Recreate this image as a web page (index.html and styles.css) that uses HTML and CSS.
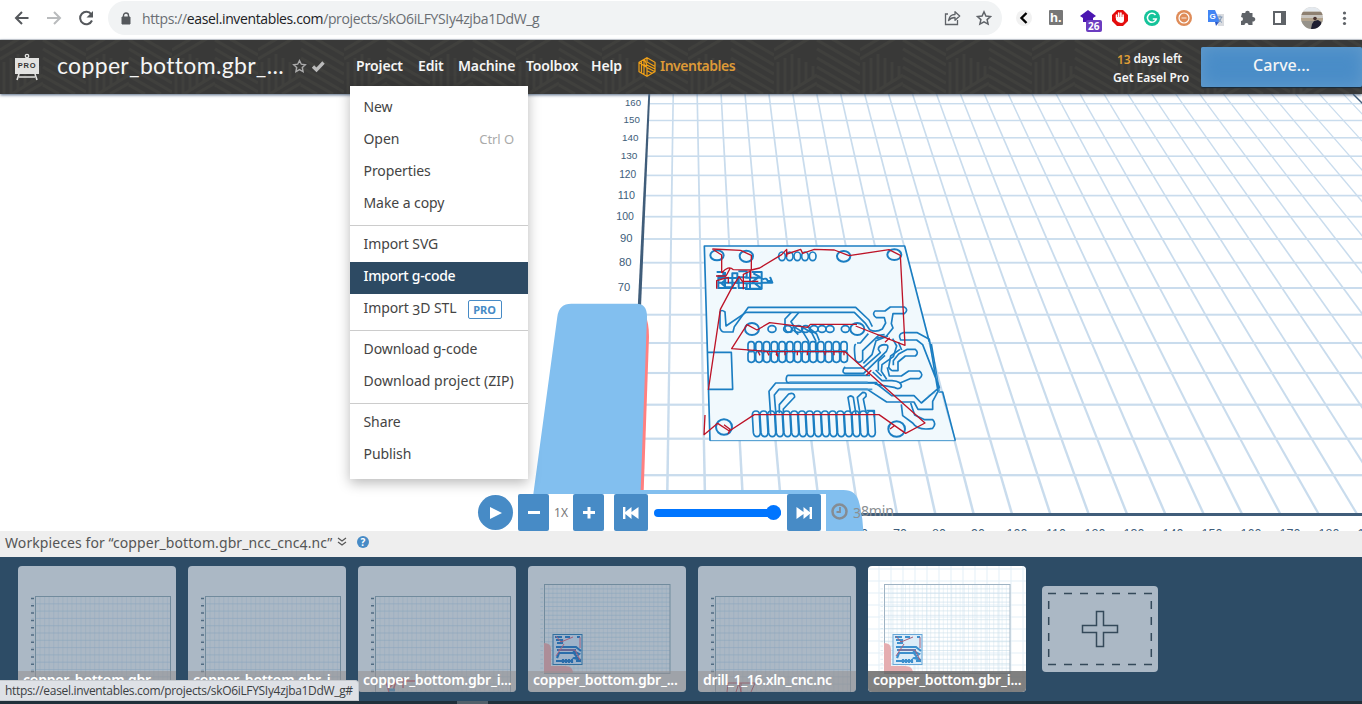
FILE: index.html
```html
<!DOCTYPE html>
<html lang="en">
<head>
<meta charset="utf-8">
<title>Easel</title>
<link rel="stylesheet" href="styles.css">
</head>
<body>
<div class="app">
  <div class="browser">
    <svg class="nav-icons" width="108" height="39" viewBox="0 0 108 39" fill="none">
      <path d="M28.500 18H16.500M22 12l-6 6 6 6" stroke="#55585c" stroke-width="2"/>
      <path d="M47 18h12.500M54 12l6 6-6 6" stroke="#b9bbbd" stroke-width="2"/>
      <path d="M91.300 14.300A6.200 6.200 0 1 0 92 20.500" stroke="#55585c" stroke-width="2"/>
      <path d="M93 11v6.500h-6.500z" fill="#55585c"/>
    </svg>
    <div class="omnibox">
      <svg width="10" height="13" viewBox="0 0 10 13"><path d="M1 5h8v7H1z" fill="#55585c" stroke="#55585c" stroke-linejoin="round"/><path d="M2.500 5V3.500a2.500 2.500 0 0 1 5 0V5" fill="none" stroke="#55585c" stroke-width="1.400"/></svg>
      <span class="url">https://<b>easel.inventables.com</b>/projects/skO6iLFYSIy4zjba1DdW_g</span>
      <svg class="share" width="48" height="20" viewBox="944 8 48 20" fill="none" stroke="#5f6368" stroke-width="1.300">
        <path d="M948 14h-2.500v10.500h12V20"/><path d="M948.500 20.500q1-6 6.500-6v-2.800l4.700 4.300-4.700 4.300v-2.800q-4 0-6.500 3z" stroke-linejoin="round"/>
        <path d="M984 11.800l1.900 4.200 4.600.5-3.400 3.100 1 4.500-4.100-2.300-4.100 2.300 1-4.500-3.400-3.100 4.600-.5z" stroke-width="1.500"/>
      </svg>
    </div>
    <svg class="extensions" width="360" height="39" viewBox="1002 0 360 39">
      <circle cx="1024" cy="18" r="8" fill="#f1f1f1"/><path d="M1026.500 13l-5 5 5 5" fill="none" stroke="#000" stroke-width="2.400"/>
      <rect x="1049" y="10" width="14" height="15" rx="1" fill="#777"/><text x="1050" y="22" class="ext-letter">h.</text>
      <path d="M1088 10l8 6-3 2v4h-10v-4l-3-2z" fill="#4b16b1"/><rect x="1086" y="20" width="16" height="12" rx="2" fill="#6b3cc0"/><text x="1088" y="30" class="ext-count">26</text>
      <path d="M1117 10h6l5 5v6l-5 5h-6l-5-5v-6z" fill="#e40d0d"/><path d="M1116.500 18v-3M1118.700 18v-5M1120.900 18v-5M1123.100 19v-4" stroke="#fff" stroke-width="1.600" stroke-linecap="round"/><path d="M1116 17h8v3q0 3-3 3-3 0-5-3z" fill="#fff"/>
      <circle cx="1152" cy="18" r="8" fill="#15c39a"/><path d="M1155.500 15a4.500 4.500 0 1 0 .8 4h-3.500" fill="none" stroke="#fff" stroke-width="1.500"/>
      <circle cx="1184" cy="18" r="8" fill="#df8c59"/><circle cx="1184" cy="18" r="5" fill="none" stroke="#fff" stroke-width="1.200"/><path d="M1181.500 18h5" stroke="#f3cdb5" stroke-width="1.500"/>
      <path d="M1215 14h9v12h-6z" fill="#dadce0"/><path d="M1208 10h7l5 12h-12z" fill="#4285f4"/><path d="M1215 22h4l-3 4z" fill="#2a56c6"/><text x="1209.500" y="19" class="ext-g">G</text><path d="M1217.500 17h5M1220 15.500V17M1218 22.500q3-2 3.500-5.500M1218.500 18.500q1.500 3 3.500 4" fill="none" stroke="#7d96b5"/>
      <path d="M1242 13h3.200a2.300 2.300 0 1 1 4.600 0h2.700v4a2.300 2.300 0 1 1 0 4.500v3.500h-4a2 2 0 0 0-4 0H1241v-4a2 2 0 0 0 0-4z" fill="#5f6368"/>
      <path d="M1274 12h11v12h-11z" fill="none" stroke="#5f6368" stroke-width="2"/><path d="M1281 12h5v12h-5z" fill="#5f6368"/>
      <clipPath id="avatar"><circle cx="1312" cy="18" r="11"/></clipPath>
      <g clip-path="url(#avatar)"><path d="M1300 6h24v24h-24z" fill="#c9c5c0"/><path d="M1300 6h24v5h-24z" fill="#e4e9ee"/><path d="M1300 12h24v3h-24z" fill="#8e8071"/><path d="M1300 18h24v3h-24z" fill="#b3a48f"/><path d="M1300 21h24v8h-24z" fill="#96928a"/><path d="M1311 29l1-5 2-3 4-1 3 2v7z" fill="#1e1e31"/><circle cx="1315" cy="18.500" r="1.800" fill="#493330"/></g>
      <g fill="#5f6368"><circle cx="1344.500" cy="13" r="1.600"/><circle cx="1344.500" cy="18.300" r="1.600"/><circle cx="1344.500" cy="23.500" r="1.600"/></g>
    </svg>
  </div>

  <header class="header">
    <svg class="header-pattern" width="1362" height="54">
      <defs><pattern id="weave" width="86" height="54" patternUnits="userSpaceOnUse">
        <g fill="none" stroke="#40403d" stroke-width="3">
          <path d="M4 22v32M11 18v36M18 14v36M25 18v28M32 22v20M39 26v12"/>
          <path d="M0 10L22-3M0 19L36-2M43 0l43 25M43 9l43 25M43 18l43 25M43 27l43 25M43 36l32 18M43 45l16 9M58-1l28 16M24 54l19-11M12 54l31-19"/>
        </g></pattern></defs>
      <rect width="1362" height="54" fill="url(#weave)"/>
    </svg>
    <svg class="logo" width="26" height="28" viewBox="0 0 26 28"><path d="M1 5h24v16H1z" fill="#e3e3e1"/><circle cx="13" cy="3" r="1.700" fill="none" stroke="#e3e3e1" stroke-width="1.300"/><path d="M5 21l-2 6M21 21l2 6M5 24h16" stroke="#e3e3e1" stroke-width="1.600"/><text x="13" y="15.200" text-anchor="middle" class="logo-text">PRO</text></svg>
    <h1 class="title">copper_bottom.gbr_...</h1>
    <svg class="title-icons" width="34" height="16" viewBox="292 18 34 16"><path d="M299.500 20.500l1.800 3.700 4 .5-3 2.800.8 4.100-3.600-2-3.600 2 .8-4.100-3-2.800 4-.5z" fill="none" stroke="#aaa" stroke-width="1.400"/><path d="M313 26.500l3.500 3.500 7-7.500" fill="none" stroke="#bbb" stroke-width="3.300"/></svg>
    <nav class="menu">
      <a class="m1">Project</a><a class="m2">Edit</a><a class="m3">Machine</a><a class="m4">Toolbox</a><a class="m5">Help</a>
      <a class="brand"><svg width="18" height="20" viewBox="0 0 18 20" fill="none" stroke="#f2a117" stroke-width="1.200"><path d="M9 .7l8 4.600v9.400l-8 4.600-8-4.600V5.300zM9 10.500v8.500M1 5.500l8 5M3.500 7.500v8M6 9v8M6 3v4.500l3 1.700M3.500 4.500v2M9 1v4l8 4.500M6.500 2.500L9 8l8 4M9 10.500l7.500 4M9.500 14l5 2.500"/></svg><span>Inventables</span></a>
    </nav>
    <div class="trial"><div><em>13</em> days left</div><div class="get">Get Easel Pro</div></div>
    <div class="carve">Carve...</div>
  </header>

  <main class="stage">
    <svg class="scene" width="1362" height="437" viewBox="0 94 1362 437">
      <g id="grid" fill="#c9dced"></g>
      <path d="M648.300 94h1.900L640 330h-3.400z" fill="#405d7a"/>
      <path d="M1353 94l16 16" stroke="#405d7a" stroke-width="1.400"/>
      <path d="M840 514.400h522" stroke="#405d7a" stroke-width="3"/>
      <g id="labels" class="axis"></g>
      <g transform="translate(470 290) scale(.33333)">
        <path d="M525 70q12 30 12 70L521 605H500z" fill="#ff8080"/>
        <path d="M190 612L262 80q5-39 42-39H500q31 0 31 39L512 600H1120q40 0 48 40 10 38 12 83H190z" fill="#82bfef"/>
      </g>
      <g class="board" transform="translate(690 230) scale(.33333)">
        <path d="M43 48h601l74 288-6 6 38 146 45 144H60z" fill="#f1f9fd" stroke="none"/>
        <path d="M60 632L43 48H644L718 336M724 342l24 144h10l38 146M52 367h72l4 111H56"/>
        <path d="M60 632h736" stroke-width="2.500"/>
        <path d="M748 486l-35 10M718 336l30 150" stroke="#b5d8ef" stroke-width="2"/>
        <g id="pads"></g>
        <g stroke-width="6">
          <ellipse cx="81" cy="76" rx="20" ry="15"/><ellipse cx="169" cy="79" rx="20" ry="17"/><ellipse cx="461" cy="79" rx="20" ry="16"/><ellipse cx="613" cy="74" rx="21" ry="16"/>
          <ellipse cx="186" cy="297" rx="21" ry="18"/><ellipse cx="502" cy="297" rx="21" ry="18"/><ellipse cx="102" cy="591" rx="24" ry="23"/><ellipse cx="620" cy="597" rx="25" ry="23"/>
        </g>
        <path d="M90 246q4-9 15 0l3 42 60-41H493l34 34 12 18q18 10 38-2l10-18-4-16h-24q-14-10-4-20h30l16-12h42q14 8 0 20h-34l-5 30 5 13-20 25-30 6"/>
        <path d="M90 246v48q4 12 12 12h27l4-16 42-58h322l40 38 10 20M304 247l-19 20v30q6 14 20 8l6-18-8-12 24-28"/>
        <path d="M312 290l28 18 16 26v30M335 290l30 18 12 24v30M352 290l28 22 8 20M310 300l15 14"/>
        <path d="M464 412q-10 14 0 18h57l68-66q12-20-6-20-18 2-18 14l6 10-52 46h-55zM292 436h248M292 458h270M292 436q-7 12 0 22"/>
        <path d="M242 556l-5-72 20-25h300l48 38h67l22 22 54-47-50-128-18-14h-48q-10-18 8-22h42l36 20 26 156-16 30v24h-44l-12-22h-82l-58-38H267l-14 17 5 60"/>
        <path d="M268 550v-26l28-32q18-6 18 9l-34 36v17M482 550l-8-48q8-8 16 0l8 52M510 550l-8-48 16-15q13 0 10 12l-8 8 8 40M530 542h23v20"/>
        <path d="M498 344q-8-4-2 46 10 14 22 0v-28l48-46 18-2M535 311l-24 28h-10M520 400l26-26 12-42 36-14M608 326l12 22-10 32-34 24-2 20 16 24M548 426l28 26h30q30 2 28 18-8 10-22 2l-58-10M592 412l6 26h36l22-15h32q15 11 0 23h-28l-28 12"/>
        <path d="M630 358l-28 20-6 34q8 12 14 10h14v-26l22-18h30q12-10 0-20h-24l-26 14-16 20v14M565 422v-28l20-18M575 438l-18-18M625 336l10 24"/>
        <path d="M634 523l4 34 30 22q16 24 60 16 12-14 0-26h-24l-30-14-12-36"/>
        <path d="M298 457h235M267 478h280" stroke="#4398d1" stroke-width="5"/>
        <g stroke-width="6"><path d="M80 126h20v12h-15v36M105 126v46h22v-42h15v32M145 124h25v18h-24v32h24v-14M180 124v52h35v-50h-30M82 144h62M82 158h78M82 174h58M166 143h48M162 160h50M165 177h50M218 148q12-6 15 5h12l-4-10 6 15h-29M98 140l8 10-12 10 12 10M190 130l18 10-20 15 25 20"/></g>
        <g stroke="#bd1428" stroke-width="4">
          <path d="M67 57l85 4 32 15v44M67 57l28 18 0 54M290 58v22M95 129q20-24 35-10l54 1 25-6 66-40 15-16 1 14 41-14 6 12 35-12 60 2 44 17 120-18 34 17 14 270-148-58M55 480L91 238l32-60 24-38 10 14h48M78 138h30l12-22M45 555l-3 59 41-34 35 23 75-49h374l80 56 58-31L465 365l-235-1-105-8 46-72 30 16 38-22 114 14 8-9h140M585 337l14-14M529 436l15-15M80 176v-24l35-10v18M160 178v-45l22-10v22M102 584l18 14-5 13M600 597l15-11"/>
          <path d="M205 366l5 10M232 366l5 10M258 366l5 12-5-6M285 366v10M322 366v10M352 366v10M405 366v10M432 366v10M462 366v10"/>
        </g>
      </g>
    </svg>
    <div class="player">
      <span class="play"><svg width="14" height="14"><path d="M1 1l12 6-12 6z" fill="#fff"/></svg></span>
      <div class="controls">
        <span class="btn minus"><svg width="12" height="12"><path d="M0 5.500h12" stroke="#fff" stroke-width="3"/></svg></span>
        <span class="speed">1X</span>
        <span class="btn plus"><svg width="12" height="12"><path d="M0 5.500h12M6 0v11.500" stroke="#fff" stroke-width="3"/></svg></span>
        <span class="btn skip first"><svg width="16" height="12" viewBox="0 0 16 12"><path d="M0 0h2.400v5L8.500 0v5L15.500 0v12L8.500 7v5L2.400 7v5H0z" fill="#fff"/></svg></span>
        <span class="slider"><i></i></span>
        <span class="btn skip"><svg width="16" height="12" viewBox="0 0 16 12"><path d="M16 0h-2.400v5L7.500 0v5L.5 0v12L7.500 7v5l6.100-5v5H16z" fill="#fff"/></svg></span>
      </div>
      <svg class="clock" width="17" height="17" fill="none" stroke="#858c93"><circle cx="8.500" cy="8.500" r="7" stroke-width="2.500"/><path d="M9 4v5H5.500" stroke-width="1.800"/></svg>
      <span class="time"><i>3</i>8min</span>
    </div>
  </main>

  <div class="dropdown">
    <div class="item">New</div><div class="item">Open<span class="key">Ctrl O</span></div><div class="item">Properties</div><div class="item">Make a copy</div>
    <hr>
    <div class="item">Import SVG</div><div class="item active">Import g-code</div><div class="item"><span>Import <i class="old">3</i>D STL</span><span class="pro">PRO</span></div>
    <hr>
    <div class="item">Download g-code</div><div class="item zip">Download project (ZIP)</div>
    <hr>
    <div class="item">Share</div><div class="item">Publish</div>
  </div>

  <div class="workbar"><span class="worktext">Workpieces for “copper_bottom.gbr_ncc_cnc<i class="old">4</i>.nc”</span>
    <svg width="10" height="10" fill="none" stroke="#555" stroke-width="1.200"><path d="M1 1l4 3 4-3M1 5l4 3 4-3"/></svg>
    <span class="help">?</span>
  </div>

  <section class="pieces">
    <div class="card"><svg data-kind="a" width="158" height="126"></svg><span>copper_bottom.gbr_...</span></div>
    <div class="card"><svg data-kind="a" width="158" height="126"></svg><span>copper_bottom.gbr_i...</span></div>
    <div class="card"><svg data-kind="c" width="158" height="126"></svg><span>copper_bottom.gbr_i...</span></div>
    <div class="card"><svg data-kind="b" width="158" height="126"></svg><span>copper_bottom.gbr_...</span></div>
    <div class="card"><svg data-kind="d" width="158" height="126"></svg><span class="drill">drill_1_16.xln_cnc.nc</span></div>
    <div class="card current"><svg data-kind="e" width="158" height="126"></svg><span>copper_bottom.gbr_i...</span></div>
    <div class="add"><svg width="116" height="86" fill="none" stroke="#34495a" stroke-width="1.500"><path d="M6 7.500H110M6 78.500H110" stroke-dasharray="8 8"/><path d="M6.700 15V72M109.300 15V72" stroke-dasharray="8 8"/><path d="M54.500 25.500h7v14h14v7h-14v14h-7v-14h-14v-7h14z"/></svg></div>
  </section>
  <div class="taskbar"><i></i></div>
  <div class="status">https://easel.inventables.com/projects/skO6iLFYSIy4zjba1DdW_g#</div>
</div>
<script src="scene.js"></script>
</body>
</html>
```
FILE: styles.css
```css
* { box-sizing: border-box; }
body { margin: 0; font-family: "Noto Sans", sans-serif; background: #fff; }
svg { display: block; flex: none; }
em, i, b { font-style: normal; font-weight: inherit; }
.app { position: relative; width: 1362px; height: 704px; overflow: hidden; display: flex; flex-direction: column; }

.browser { height: 40px; display: flex; border-bottom: 1px solid #d6d8da; }
.omnibox { width: 894px; height: 34px; margin-top: 1px; border-radius: 17px; background: #f1f3f4; display: flex; align-items: center; padding: 0 10px 0 13px; }
.url { font-family: "Open Sans", sans-serif; font-size: 14px; margin-left: 11px; color: #6a6e73; white-space: nowrap; letter-spacing: -.37px; }
.url b { color: #202124; }
.share { margin-left: auto; }
.ext-letter { font: bold 13px "Liberation Sans", sans-serif; fill: #fff; }
.ext-count { font: bold 10px "Open Sans", sans-serif; fill: #fff; }
.ext-g { font: bold 8px "Liberation Sans", sans-serif; fill: #fff; }

.header { position: relative; height: 54px; background: #393938; display: flex; color: #f5f5f5; box-shadow: 0 1px 3px #506580; z-index: 1; }
.header-pattern { position: absolute; inset: 0; }
.header > :not(.header-pattern) { position: relative; }
.logo { margin: 13px 0 0 14px; }
.logo-text { font: bold 7.5px "Liberation Sans", sans-serif; letter-spacing: .7px; fill: #333; }
.title { margin: 0 0 0 17px; width: 235px; font: 400 23px/51px Lato, sans-serif; white-space: nowrap; letter-spacing: .32px; }
.title-icons { margin-top: 18px; }
.menu { display: flex; margin-left: 30px; width: 380px; font-size: 14px; line-height: 51px; font-weight: 600; white-space: nowrap; letter-spacing: -.15px; }
.m1 { width: 62px; } .m2 { width: 40px; } .m3 { width: 68px; } .m4 { width: 65px; } .m5 { width: 47px; }
.brand { display: flex; color: #dd9a37; letter-spacing: -.5px; }
.brand svg { margin: 17px 4px 0 0; }
.trial { margin-left: auto; width: 88px; font-size: 12px; font-weight: 600; line-height: 19px; padding-top: 9px; padding-right: 12px; white-space: nowrap; display: flex; flex-direction: column; align-items: flex-end; letter-spacing: -.05px; }
.trial div:first-child { padding-right: 7px; letter-spacing: -.15px; }
.trial em { position: relative; top: 1px; color: #df9c35; }
.carve { width: 161px; height: 40px; margin-top: 7px; border-radius: 2px; background: #4a8dc8; box-shadow: inset 0 0 16px #629bcc, 0 1px 1px #162b3e; text-align: center; line-height: 36px; font-size: 16px; font-weight: 500; }

.stage { position: relative; height: 437px; background: #fff; }
.axis text { font-family: "Liberation Sans", sans-serif; fill: #405d7a; }
.board { fill: none; stroke: #1b7ec2; stroke-width: 5; stroke-linejoin: round; }
.player { position: absolute; left: 478px; top: 400px; height: 37px; display: flex; align-items: center; }
.play { width: 35px; height: 35px; border-radius: 50%; background: #478bc6; display: flex; align-items: center; justify-content: center; margin-right: 5px; }
.controls { width: 308px; height: 37px; background: #fff; display: flex; align-items: center; }
.btn { width: 31px; height: 37px; border-radius: 2px; background: #478bc6; display: flex; align-items: center; justify-content: center; }
.speed { width: 24px; text-align: center; font-size: 12px; color: #777; }
.skip { width: 34px; }
.first { margin-left: 10px; }
.slider { position: relative; width: 127px; height: 8px; margin: 0 6px; border-radius: 4px; background: #0075ff; }
.slider i { position: absolute; right: 0; top: -4px; width: 15px; height: 15px; border-radius: 50%; background: #0075ff; }
.clock { margin: -3px 0 0 5px; }
.time { margin: -4px 0 0 5px; font-size: 14px; color: #8b8f92; letter-spacing: -.1px; }
.time i, .old { position: relative; top: 2px; }

.dropdown { position: absolute; z-index: 3; left: 350px; top: 86px; width: 178px; height: 393px; background: #fff; padding-top: 7px; box-shadow: 0 4px 12px rgba(0,0,0,.28); font-size: 14px; color: #444; }
.item { height: 32px; line-height: 28px; padding-left: 13.5px; display: flex; white-space: nowrap; letter-spacing: -.08px; }
.zip { letter-spacing: 0.04px; }
.active { background: #2d4a63; color: #fff; font-weight: 500; letter-spacing: -.3px; }
.key { margin-left: auto; margin-right: 14px; font-size: 13px; color: #aaa; }
.dropdown hr { border: 0; border-top: 1px solid #ccc; margin: 4px 0; }
.pro { margin: 6px 0 0 11px; width: 34px; height: 19px; border: 1px solid #478bc6; border-radius: 2px; font-size: 11px; line-height: 17px; font-weight: 700; color: #478bc6; text-align: center; }

.workbar { height: 26px; background: #eee; display: flex; align-items: center; padding: 0 0 4px 5px; font-size: 14px; color: #555; z-index: 1; }
.worktext { width: 332px; white-space: nowrap; letter-spacing: .09px; }
.help { width: 12px; height: 12px; border-radius: 50%; background: #478bc6; color: #fff; font-size: 10px; font-weight: 700; text-align: center; line-height: 12px; margin-left: 10px; }
.pieces { height: 144px; background: #2d4c66; display: flex; gap: 12px; padding: 9px 18px; }
.card { position: relative; flex: none; width: 158px; height: 126px; border-radius: 4px; overflow: hidden; background: #abb8c5; }
.card span { position: absolute; left: 0; right: 0; bottom: 0; height: 21px; padding-left: 5px; line-height: 18px; font-size: 14px; font-weight: 600; color: #fff; background: rgba(150,145,145,.55); white-space: nowrap; letter-spacing: -.22px; }
.card .drill { letter-spacing: -.34px; }
.current { background: #fff; }
.current span { background: rgba(100,100,100,.82); }
.add { width: 116px; height: 86px; margin: 20px 0 0 4px; border-radius: 4px; background: #abb8c5; }
.taskbar { height: 3px; background: #20303a; padding-left: 457px; }
.taskbar i { display: block; width: 31px; height: 3px; background: #52606a; }
.status { position: absolute; z-index: 2; left: 0; top: 680px; width: 359px; height: 21px; padding-left: 5px; background: #dee1e6; border: 1px solid #c5c9ce; border-left: 0; border-radius: 0 4px 0 0; font: 12px/19px "Open Sans", sans-serif; color: #3c4043; white-space: nowrap; letter-spacing: -.32px; }
```
FILE: scene.js
```js
const rows = [103.7, 120.5, 137.8, 156.2, 175.4, 195.6, 216.7, 239, 262.7, 288, 314.7, 343, 373, 404.7, 438.7, 475.2];
let g = '';
const axisLeft = y => 649.3 - (y - 94) * 20.6 / 419;
rows.forEach((y, i) => {
  const h = 1.4 + i * 0.06;
  g += `<rect x="${axisLeft(y)}" y="${y - h / 2}" width="760" height="${h}"/>`;
});
for (let k = 1; k < 30; k++) {
  const a = 649.3 + 23.93 * k, b = 628.7 + 38.3 * k;
  g += `<path d="M${a - .8} 94h1.6L${b + 1.3} 513h-2.6z"/>`;
}
document.getElementById('grid').innerHTML = g;

let t = '';
for (let i = 0; i < 10; i++) {
  const value = 160 - i * 10, size = 9 + i * .3, w = (value > 99 ? 16 + i * .25 : 12.5);
  t += `<text x="${641 - i * 1.2 - w}" y="${rows[i] - .5 + size * .34}" font-size="${size}" textLength="${w}" lengthAdjust="spacingAndGlyphs">${value}</text>`;
}
for (let k = 6; k < 20; k++) {
  t += `<text x="${900 + (k - 7) * 39}" y="538" font-size="12.500" text-anchor="middle">${k * 10}</text>`;
}
document.getElementById('labels').innerHTML = t;

let p = '';
for (let i = 0; i < 13; i++) {
  const x = 174 + i * 23.2;
  p += `<rect x="${x}" y="335" width="19" height="30" rx="9"/><rect x="${x}" y="363" width="20" height="34" rx="9"/>`;
}
for (let i = 0; i < 16; i++) {
  const x = 187 + i * 23;
  p += `<path d="M${x} 555q0-12 11-12t10 12l3 53q-1 12-10 12t-11-12z"/>`;
}
for (let i = 0; i < 5; i++) p += `<ellipse cx="${276 + i * 23}" cy="79" rx="10" ry="13"/>`;
for (const x of [246, 293, 326, 347, 372, 396, 420, 466]) p += `<ellipse cx="${x}" cy="297" rx="12" ry="10"/>`;
document.getElementById('pads').innerHTML = p;

document.querySelectorAll('.card svg').forEach(svg => {
  const kind = svg.dataset.kind, full = kind === 'b' || kind === 'e';
  const x0 = full ? 16.5 : 17.5, y0 = full ? 18.5 : 30.5;
  const w = full ? 125.5 : 135, h = full ? 89 : 110;
  const dx = full ? 4.2 : 4.55, dy = full ? 4.4 : 7.3;
  const pale = kind === 'e';
  let s = '';
  if (pale) {
    for (let x = 11; x < 158; x += 12) s += `<path d="M${x} 0v126" stroke="#e3eff7"/>`;
    for (let y = 3; y < 126; y += 12) s += `<path d="M0 ${y}h158" stroke="#e3eff7"/>`;
  }
  for (let x = x0 + dx; x < x0 + w; x += dx) s += `<path d="M${x} ${y0}v${h}" stroke="${pale ? '#d3e4ef' : '#96adc1'}" stroke-width=".5"/>`;
  for (let y = y0 + dy; y < y0 + h; y += dy) s += `<path d="M${x0} ${y}h${w}M${x0 - 4} ${y}h2.500" stroke="${pale ? '#c9ddea' : '#8ba6be'}" stroke-width=".6"/>`;
  if (!full) for (let y = y0 + 2; y < 110; y += 7.3) s += `<path d="M${x0 - 4.5} ${y}h3" stroke="#506b82" stroke-width="1.500"/>`;
  s += `<rect x="${x0}" y="${y0}" width="${w}" height="${h}" fill="none" stroke="${pale ? '#9fb3c3' : '#718b9d'}"/>`;
  if (full) {
    s += `<path d="M16 77q7 0 7 6v17h14q8 0 8 7H16z" fill="${pale ? '#e5adb0' : '#ad8d98'}"/>`;
    s += `<rect x="25" y="68.500" width="29" height="30" fill="${pale ? '#dcecf8' : '#9eb3ca'}" stroke="${pale ? '#67a7d8' : '#33709f'}"/>`;
    s += `<path d="M27 71h7m3 0h5m7 0h3M28 74h6v3h-5M28 81h20l5 4M29 84h19M30 87h18M29 92l2-5h15l6 8M31 95h14M35 93v4m3-4v4m3-4v4m3-4v4M45 85l6 3-5 4 7 2M28 95h3m17 0h5" fill="none" stroke="${pale ? '#3d90ce' : '#2a6dab'}" stroke-width="2.200"/>`;
    s += `<path d="M28 70l5 6 12-5M28 90l8-12M30 84h17l5 10M52 71v11" fill="none" stroke="#a65f7a"/>`;
  }
  if (kind === 'd') s += `<path d="M29 126l1-9h27l-4 9M38 126l3-9 2 9M43 117v9" fill="none" stroke="#922f48"/>`;
  if (kind === 'c') s += `<path d="M27 112l4 14M30 123l8-8-3 10M37 115h20M45 112v10" fill="none" stroke="#a23f5a" stroke-width="1.500"/><path d="M31 124h6" stroke="#2779b4" stroke-width="3"/>`;
  svg.innerHTML = s;
});
```
